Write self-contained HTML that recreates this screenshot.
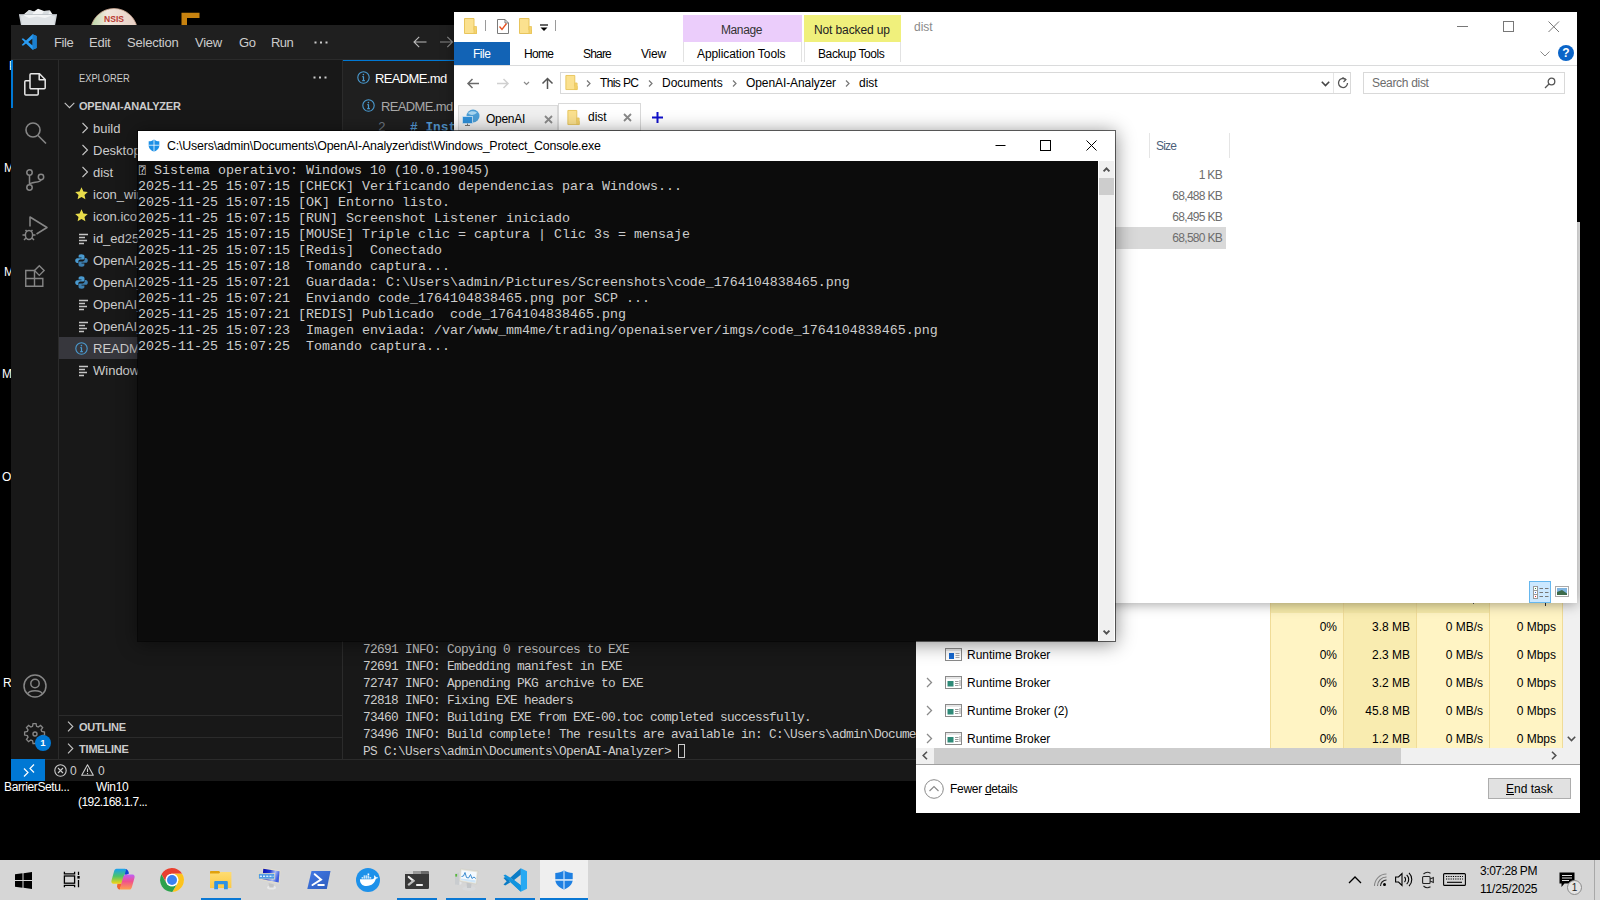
<!DOCTYPE html>
<html><head><meta charset="utf-8"><title>Desktop</title>
<style>
*{box-sizing:border-box;margin:0;padding:0}
html,body{width:1600px;height:900px;overflow:hidden;background:#000}
body{position:relative;font-family:"Liberation Sans",sans-serif;font-size:12px;color:#000}
.abs{position:absolute}
.t{position:absolute;white-space:nowrap;line-height:1}
svg{position:absolute;overflow:visible}
/* ---------- desktop ---------- */
#desk .lbl{color:#fff;font-size:12px}
/* ---------- taskbar ---------- */
#taskbar{left:0;top:860px;width:1600px;height:40px;background:#d6d6d6}
#taskbar .ul{top:38px;height:2px;background:#0a78d4}
/* ---------- vscode ---------- */
#vsc{left:11px;top:25px;width:1000px;height:756px;z-index:0;background:#181818;color:#ccc;overflow:hidden}
#vsc .title{left:0;top:0;width:1000px;height:35px;background:#1f1f1f;border-bottom:1px solid #2b2b2b;z-index:2}
#vsc .act{left:0;top:34px;width:48px;height:700px;background:#181818;border-right:1px solid #2b2b2b}
#vsc .side{left:48px;top:34px;width:284px;height:700px;background:#181818;border-right:1px solid #2b2b2b}
#vsc .edit{left:332px;top:34px;width:668px;height:700px;background:#1f1f1f}
#vsc .status{left:0;top:734px;width:1000px;height:22px;background:#181818;border-top:1px solid #2b2b2b}
#vsc .m{top:11px;font-size:13px;color:#ccc}
#vsc .row{font-size:13px;color:#ccc}
#vsc .mono{font-family:"Liberation Mono",monospace;font-size:12.83px}
#vsc .term pre{position:absolute;left:20px;top:2px;font-family:"Liberation Mono",monospace;font-size:12.8px;letter-spacing:-0.681px;line-height:17px;color:#ccc}
#vsc .cur{display:inline-block;width:7px;height:14px;border:1px solid #ccc;vertical-align:-3px}
/* ---------- explorer ---------- */
#exp{left:454px;top:12px;width:1123px;height:591px;background:#fff;box-shadow:0 1px 12px rgba(0,0,0,.38)}
#exp .sz{right:355px;color:#6d6d6d}
/* ---------- task manager ---------- */
#tm{left:916px;top:222px;width:664px;height:591px;background:#f0f0f0;overflow:hidden}
/* ---------- console ---------- */
#con{left:137px;top:130px;width:979px;height:512px;background:#0c0c0c;border:1px solid rgba(0,0,0,.58);background-clip:padding-box;box-shadow:0 2px 18px rgba(0,0,0,.45)}
#con .tb{left:0;top:0;width:977px;height:30px;background:#fff}
#con pre{position:absolute;left:0;top:32px;font-family:"Liberation Mono",monospace;font-size:13.33px;line-height:16px;color:#ccc}
</style></head><body>
<div id="desk">
 <svg style="left:17px;top:8px" width="42" height="20" viewBox="0 0 42 20"><path d="M2 6.500L40 6.500L37.500 20H4.500Z" fill="#cfd4d8"/><path d="M4 8L38 8L36.500 20H5.500Z" fill="#dfe3e6"/><path d="M6 7L12 2L17 3.500L21 0.800L27 3L33 2.500L36 7L28 10L20 8.500L12 10Z" fill="#f3f5f6"/><path d="M12 2L17 3.500L15 7L9 6ZM27 3L33 2.500L31 7L25 6.500Z" fill="#d8dde0"/><path d="M2 6.500H40" stroke="#b9bfc4" stroke-width="0.800"/></svg>
 <svg style="left:91px;top:8px" width="46" height="18" viewBox="0 0 46 18"><defs><linearGradient id="ng" x1="0" x2="1"><stop offset="0" stop-color="#b9d6a4"/><stop offset=".35" stop-color="#f1e6dc"/><stop offset="1" stop-color="#e8cfc4"/></linearGradient></defs><circle cx="23" cy="24" r="23.500" fill="url(#ng)" stroke="#c9a58f" stroke-width="0.800"/><text x="23" y="14" text-anchor="middle" font-family="Liberation Sans,sans-serif" font-weight="bold" font-size="8.500" fill="#b73a32">NSIS</text></svg>
 <svg style="left:181px;top:12px" width="19" height="14" viewBox="0 0 19 14"><path d="M0.500 0.800H18.500V6H6V14H0.500Z" fill="#c7820f"/></svg>
 <span class="t lbl" style="left:9px;top:60px">P</span>
 <span class="t lbl" style="left:4px;top:162px">M</span>
 <span class="t lbl" style="left:4px;top:266px">M</span>
 <span class="t lbl" style="left:2px;top:368px">M</span>
 <span class="t lbl" style="left:2px;top:471px">O</span>
 <span class="t lbl" style="left:3px;top:677px">R</span>
 <span class="t lbl" style="left:4px;top:781px;letter-spacing:-0.37px" id="d_bar">BarrierSetu...</span>
 <span class="t lbl" style="left:96px;top:781px;letter-spacing:-0.34px" id="d_win">Win10</span>
 <span class="t lbl" style="left:78px;top:796px;letter-spacing:-0.56px" id="d_ip">(192.168.1.7...</span>
</div>
<div id="vsc" class="abs">
 <div class="abs title">
  <svg style="left:10px;top:9px" width="16" height="16" viewBox="0 0 16 16"><path d="M11.6 0.2L5 6.5L2 4.2L0.6 5L3.6 8L0.6 11L2 11.8L5 9.5L11.6 15.8L15.6 14V2Z M11.6 4.6V11.4L7.2 8Z" fill="#2a9df4" fill-rule="evenodd"/><path d="M11.6 0.2L15.6 2V14L11.6 15.8Z" fill="#1a7fd0"/></svg>
  <span class="t m" style="left:43px;letter-spacing:-0.39px">File</span><span class="t m" style="left:78px;letter-spacing:-0.25px">Edit</span><span class="t m" style="left:116px;letter-spacing:-0.22px">Selection</span><span class="t m" style="left:184px;letter-spacing:-0.24px">View</span><span class="t m" style="left:228px;letter-spacing:-0.42px">Go</span><span class="t m" style="left:260px;letter-spacing:-0.52px">Run</span>
  <svg style="left:303px;top:16px" width="14" height="3" viewBox="0 0 14 3" fill="#ccc"><rect x="0.5" y="0.5" width="2" height="2"/><rect x="6" y="0.5" width="2" height="2"/><rect x="11.5" y="0.5" width="2" height="2"/></svg>
  <svg style="left:402px;top:11px" width="42" height="12" viewBox="0 0 42 12" fill="none" stroke="#bbb" stroke-width="1.1"><path d="M13.5 6H1M6.2 0.8L1 6L6.2 11.2"/><path d="M27 6H39.5M34.3 0.8L39.5 6L34.3 11.2" stroke="#8a8a8a"/></svg>
 </div>
 <div class="abs act">
  <div class="abs" style="left:0;top:1px;width:2px;height:48px;background:#0078d4"></div>
  <svg style="left:12px;top:13px" width="24" height="24" viewBox="0 0 24 24" fill="none" stroke="#e7e7e7" stroke-width="1.500" stroke-linejoin="round"><path d="M7 2.800A1 1 0 0 1 8 1.800H16.500L22.200 7.500V15.700A1 1 0 0 1 21.200 16.700H8A1 1 0 0 1 7 15.700Z"/><path d="M16.200 2V7.800H22"/><path d="M7 8.700H2.800A1 1 0 0 0 1.800 9.700V22A1 1 0 0 0 2.800 23H14.200A1 1 0 0 0 15.200 22V16.700"/></svg>
  <svg style="left:12px;top:61px" width="24" height="24" viewBox="0 0 24 24" fill="none" stroke="#868686" stroke-width="1.6"><circle cx="10" cy="10" r="7"/><path d="M15 15.500L23 23.500"/></svg>
  <svg style="left:12px;top:109px" width="24" height="24" viewBox="0 0 24 24" fill="none" stroke="#868686" stroke-width="1.5"><circle cx="6.500" cy="4.500" r="2.700"/><circle cx="6.500" cy="19.500" r="2.700"/><circle cx="18" cy="9" r="2.700"/><path d="M6.500 7.200V16.800M18 11.700C18 15 6.500 13.500 6.500 16.800"/></svg>
  <svg style="left:10px;top:156px" width="28" height="26" viewBox="0 0 28 26" fill="none" stroke="#868686" stroke-width="1.5" stroke-linejoin="round"><path d="M9 11.500V2L26 12.500L15.500 19"/><ellipse cx="8" cy="20" rx="3.600" ry="4.500"/><path d="M4.500 15L6 16.500M11.500 15L10 16.500M1.500 20H4.400M11.600 20H14.500M3 25L5 23M13 25L11 23"/></svg>
  <svg style="left:13px;top:205px" width="21" height="22.750" viewBox="0 0 24 26" fill="none" stroke="#868686" stroke-width="1.600"><path d="M2 7.500H12V25.500H2ZM2 16.500H21.500V25.500H12M12 16.500"/><path d="M17.500 2L23 7.500L17.500 13L12 7.500Z"/></svg>
  <svg style="left:12px;top:615px" width="24" height="24" viewBox="0 0 24 24" fill="none" stroke="#868686" stroke-width="1.5"><circle cx="12" cy="12" r="11"/><circle cx="12" cy="9.500" r="4.200"/><path d="M4.500 20C6 15.500 18 15.500 19.500 20"/></svg>
  <svg style="left:13px;top:664px" width="22" height="22" viewBox="0 0 24 24" fill="none" stroke="#868686" stroke-width="1.5"><circle cx="12" cy="12" r="2.200"/><path d="M10.300 1.500H13.700L14.300 4.600L16.200 5.400L18.800 3.600L21.200 6L19.400 8.600L20.200 10.500L23.300 11.100V14.500L20.200 15.100L19.400 17L21.200 19.600L18.800 22L16.200 20.200L14.300 21L13.700 24.100H10.300L9.700 21L7.800 20.200L5.200 22L2.800 19.600L4.600 17L3.800 15.100L0.700 14.500V11.100L3.800 10.500L4.600 8.600L2.800 6L5.200 3.600L7.800 5.400L9.700 4.600Z" transform="translate(0,-0.800) scale(0.96)"/></svg>
  <div class="abs" style="left:24px;top:676px;width:16px;height:16px;border-radius:8px;background:#0078d4;color:#fff;font-size:9.5px;font-weight:bold;text-align:center;line-height:16px">1</div>
 </div>
 <div class="abs side"></div>
 <div class="abs sidec" style="left:0;top:0;width:332px;height:757px">
  <span class="t" style="left:68px;top:48px;font-size:11px;color:#ccc;transform:scaleX(.845);transform-origin:0 0">EXPLORER</span>
  <svg style="left:302px;top:51px" width="14" height="3" viewBox="0 0 14 3" fill="#ccc"><rect x="0.500" y="0.500" width="2" height="2"/><rect x="6" y="0.500" width="2" height="2"/><rect x="11.500" y="0.500" width="2" height="2"/></svg>
  <svg style="left:53px;top:77px" width="11" height="7" viewBox="0 0 11 7"><path d="M0.700 0.800L5.500 5.600L10.300 0.800" fill="none" stroke="#c5c5c5" stroke-width="1.100"/></svg>
  <span class="t" style="left:68px;top:76px;font-size:11px;font-weight:bold;color:#ccc;letter-spacing:-0.2px">OPENAI-ANALYZER</span>
  <svg style="left:70px;top:97px" width="8" height="12" viewBox="0 0 8 12"><path d="M1.5 1L6.5 6L1.5 11" fill="none" stroke="#c5c5c5" stroke-width="1.1"/></svg>
  <span class="t row" style="left:82px;top:97px">build</span>
  <svg style="left:70px;top:119px" width="8" height="12" viewBox="0 0 8 12"><path d="M1.5 1L6.5 6L1.5 11" fill="none" stroke="#c5c5c5" stroke-width="1.1"/></svg>
  <span class="t row" style="left:82px;top:119px">Desktop</span>
  <svg style="left:70px;top:141px" width="8" height="12" viewBox="0 0 8 12"><path d="M1.5 1L6.5 6L1.5 11" fill="none" stroke="#c5c5c5" stroke-width="1.1"/></svg>
  <span class="t row" style="left:82px;top:141px">dist</span>
  <svg style="left:64px;top:162px" width="13" height="13" viewBox="0 0 13 13"><path d="M6.5 0.3L8.4 4.4L12.8 4.9L9.5 7.9L10.4 12.3L6.5 10.1L2.6 12.3L3.5 7.9L0.2 4.9L4.6 4.4Z" fill="#e8dc4a"/></svg>
  <span class="t row" style="left:82px;top:163px">icon_win.ico</span>
  <svg style="left:64px;top:184px" width="13" height="13" viewBox="0 0 13 13"><path d="M6.5 0.3L8.4 4.4L12.8 4.9L9.5 7.9L10.4 12.3L6.5 10.1L2.6 12.3L3.5 7.9L0.2 4.9L4.6 4.4Z" fill="#e8dc4a"/></svg>
  <span class="t row" style="left:82px;top:185px">icon.ico</span>
  <svg style="left:68px;top:208px" width="10" height="11" viewBox="0 0 10 11"><path d="M0 1.5H9M0 4.5H6M0 7.5H8M0 10.5H5" stroke="#c5c5c5" stroke-width="1.3"/></svg>
  <span class="t row" style="left:82px;top:207px">id_ed25519</span>
  <svg style="left:64px;top:229px" width="13" height="13" viewBox="0 0 13 13"><path d="M6.3 0.3C3.8 0.3 3.6 1.4 3.6 2.3V3.6H6.5V4.2H2.2C1 4.2 0.2 5.2 0.2 6.6C0.2 8 1 9 2.2 9H3.4V7.4C3.4 6.3 4.3 5.6 5.3 5.6H8C8.9 5.6 9.5 4.9 9.5 4.1V2.3C9.5 1.2 8.6 0.3 6.3 0.3Z" fill="#4a9bd1"/><path d="M6.7 12.7C9.2 12.7 9.4 11.6 9.4 10.7V9.4H6.5V8.8H10.8C12 8.8 12.8 7.8 12.8 6.4C12.8 5 12 4 10.8 4H9.6V5.6C9.6 6.7 8.7 7.4 7.7 7.4H5C4.1 7.4 3.5 8.1 3.5 8.9V10.7C3.5 11.8 4.4 12.7 6.7 12.7Z" fill="#3c7fb0"/></svg>
  <span class="t row" style="left:82px;top:229px">OpenAI_Analyzer.py</span>
  <svg style="left:64px;top:251px" width="13" height="13" viewBox="0 0 13 13"><path d="M6.3 0.3C3.8 0.3 3.6 1.4 3.6 2.3V3.6H6.5V4.2H2.2C1 4.2 0.2 5.2 0.2 6.6C0.2 8 1 9 2.2 9H3.4V7.4C3.4 6.3 4.3 5.6 5.3 5.6H8C8.9 5.6 9.5 4.9 9.5 4.1V2.3C9.5 1.2 8.6 0.3 6.3 0.3Z" fill="#4a9bd1"/><path d="M6.7 12.7C9.2 12.7 9.4 11.6 9.4 10.7V9.4H6.5V8.8H10.8C12 8.8 12.8 7.8 12.8 6.4C12.8 5 12 4 10.8 4H9.6V5.6C9.6 6.7 8.7 7.4 7.7 7.4H5C4.1 7.4 3.5 8.1 3.5 8.9V10.7C3.5 11.8 4.4 12.7 6.7 12.7Z" fill="#3c7fb0"/></svg>
  <span class="t row" style="left:82px;top:251px">OpenAI_Console.py</span>
  <svg style="left:68px;top:274px" width="10" height="11" viewBox="0 0 10 11"><path d="M0 1.5H9M0 4.5H6M0 7.5H8M0 10.5H5" stroke="#c5c5c5" stroke-width="1.3"/></svg>
  <span class="t row" style="left:82px;top:273px">OpenAI_Analyzer.spec</span>
  <svg style="left:68px;top:296px" width="10" height="11" viewBox="0 0 10 11"><path d="M0 1.5H9M0 4.5H6M0 7.5H8M0 10.5H5" stroke="#c5c5c5" stroke-width="1.3"/></svg>
  <span class="t row" style="left:82px;top:295px">OpenAI_Console.spec</span>
  <div class="abs" style="left:48px;top:312px;width:284px;height:22px;background:#37373d"></div>
  <svg style="left:64px;top:317px" width="13" height="13" viewBox="0 0 13 13"><circle cx="6.5" cy="6.5" r="5.7" fill="none" stroke="#4a9bd1" stroke-width="1.1"/><path d="M6.5 5.5V9.6M5.3 5.6H6.6M5.2 9.7H7.9" stroke="#4a9bd1" stroke-width="1.2" fill="none"/><circle cx="6.4" cy="3.6" r="0.8" fill="#4a9bd1"/></svg>
  <span class="t row" style="left:82px;top:317px">README.md</span>
  <svg style="left:68px;top:340px" width="10" height="11" viewBox="0 0 10 11"><path d="M0 1.5H9M0 4.5H6M0 7.5H8M0 10.5H5" stroke="#c5c5c5" stroke-width="1.3"/></svg>
  <span class="t row" style="left:82px;top:339px">Windows_Protect.spec</span>
  <div class="abs" style="left:48px;top:690px;width:284px;height:1px;background:#2b2b2b"></div>
  <div class="abs" style="left:48px;top:712px;width:284px;height:1px;background:#2b2b2b"></div>
  <svg style="left:56px;top:696px" width="7" height="11" viewBox="0 0 7 11"><path d="M1 0.700L5.800 5.500L1 10.300" fill="none" stroke="#c5c5c5" stroke-width="1.100"/></svg>
  <span class="t" style="left:68px;top:697px;font-size:11px;font-weight:bold;color:#ccc;letter-spacing:-0.2px">OUTLINE</span>
  <svg style="left:56px;top:718px" width="7" height="11" viewBox="0 0 7 11"><path d="M1 0.700L5.800 5.500L1 10.300" fill="none" stroke="#c5c5c5" stroke-width="1.100"/></svg>
  <span class="t" style="left:68px;top:719px;font-size:11px;font-weight:bold;color:#ccc;letter-spacing:-0.2px">TIMELINE</span>
 </div>
 <div class="abs edit">
  <div class="abs" style="left:0;top:0;width:668px;height:36px;background:#181818;border-bottom:1px solid #2b2b2b"></div>
  <div class="abs" style="left:0;top:1px;width:130px;height:35px;background:#1f1f1f;border-top:1px solid #0078d4;border-right:1px solid #2b2b2b"></div>
  <svg style="left:14px;top:12px" width="13" height="13" viewBox="0 0 13 13"><circle cx="6.500" cy="6.500" r="5.700" fill="none" stroke="#4a9bd1" stroke-width="1.100"/><path d="M6.500 5.500V9.600M5.300 5.600H6.600M5.200 9.700H7.900" stroke="#4a9bd1" stroke-width="1.200" fill="none"/><circle cx="6.400" cy="3.600" r="0.800" fill="#4a9bd1"/></svg>
  <span class="t" style="left:32px;top:13px;font-size:13px;color:#fff;letter-spacing:-0.64px">README.md</span>
  <svg style="left:19px;top:40px" width="13" height="13" viewBox="0 0 13 13"><circle cx="6.500" cy="6.500" r="5.700" fill="none" stroke="#4a9bd1" stroke-width="1.100"/><path d="M6.500 5.500V9.600M5.300 5.600H6.600M5.200 9.700H7.900" stroke="#4a9bd1" stroke-width="1.200" fill="none"/><circle cx="6.400" cy="3.600" r="0.800" fill="#4a9bd1"/></svg>
  <span class="t" style="left:38px;top:41px;font-size:13px;color:#a9a9a9;letter-spacing:-0.64px">README.md</span>
  <span class="t mono" style="left:35px;top:63px;color:#6e7681">2</span>
  <span class="t mono" style="left:67px;top:63px;color:#569cd6;font-weight:bold"># Instalación</span>
  <div class="abs term" style="left:0;top:580px;width:668px;height:120px;background:#181818">
<pre>72691 INFO: Copying 0 resources to EXE
72691 INFO: Embedding manifest in EXE
72747 INFO: Appending PKG archive to EXE
72818 INFO: Fixing EXE headers
73460 INFO: Building EXE from EXE-00.toc completed successfully.
73496 INFO: Build complete! The results are available in: C:\Users\admin\Documents\OpenAI-Analyzer\dist
PS C:\Users\admin\Documents\OpenAI-Analyzer&gt; <span class="cur"></span></pre>
  </div>
 </div>
 <div class="abs status">
  <div class="abs" style="left:0;top:-1px;width:34px;height:23px;background:#0078d4"></div>
  <svg style="left:12px;top:4px" width="12" height="13" viewBox="0 0 12 13" fill="none" stroke="#fff" stroke-width="1.200"><path d="M1 4.500L5 8.500L1 12.500M11 0.500L7 4.500L11 8.500"/></svg>
  <svg style="left:43px;top:4px" width="13" height="13" viewBox="0 0 13 13" fill="none" stroke="#ccc" stroke-width="1.100"><circle cx="6.500" cy="6.500" r="5.700"/><path d="M4 4L9 9M9 4L4 9"/></svg>
  <span class="t" style="left:59px;top:5px;font-size:12px;color:#ccc">0</span>
  <svg style="left:70px;top:4px" width="13" height="12" viewBox="0 0 13 12" fill="none" stroke="#ccc" stroke-width="1.100" stroke-linejoin="round"><path d="M6.500 0.800L12.300 11.300H0.700Z"/><path d="M6.500 4.500V8M6.500 9V10.200"/></svg>
  <span class="t" style="left:87px;top:5px;font-size:12px;color:#ccc">0</span>
 </div>
</div>
<div id="tm" class="abs">
 <div class="abs" style="left:0;top:0;width:647px;height:542px;background:#fff"></div>
 <div class="abs" style="left:354px;top:380px;width:73px;height:146px;background:#fff4c4"></div>
 <div class="abs" style="left:427px;top:380px;width:74px;height:146px;background:#f9ecb0"></div>
 <div class="abs" style="left:501px;top:380px;width:73px;height:146px;background:#fff4c4"></div>
 <div class="abs" style="left:574px;top:380px;width:73px;height:146px;background:#fff4c4"></div>
 <div class="abs" style="left:354px;top:380px;width:220px;height:11px;background:#f3e6a2;opacity:.8"></div>
 <div class="abs" style="left:629px;top:381px;width:1px;height:3px;background:#333"></div>
 <div class="abs" style="left:557px;top:381px;width:1px;height:1px;background:#555"></div>
 <div class="abs" style="left:354px;top:380px;width:1px;height:146px;background:#f0dc98"></div>
 <div class="abs" style="left:427px;top:380px;width:1px;height:146px;background:#f0dc98"></div>
 <div class="abs" style="left:500px;top:380px;width:1px;height:146px;background:#f0dc98"></div>
 <div class="abs" style="left:573px;top:380px;width:1px;height:146px;background:#f0dc98"></div>
 <div class="abs" style="left:646px;top:380px;width:1px;height:146px;background:#f0dc98"></div>
  <span class="t" style="right:243px;top:399px">0%</span>
  <span class="t" style="right:170px;top:399px">3.8 MB</span>
  <span class="t" style="right:97px;top:399px">0 MB/s</span>
  <span class="t" style="right:24px;top:399px">0 Mbps</span>
  <span class="t" style="right:243px;top:427px">0%</span>
  <span class="t" style="right:170px;top:427px">2.3 MB</span>
  <span class="t" style="right:97px;top:427px">0 MB/s</span>
  <span class="t" style="right:24px;top:427px">0 Mbps</span>
  <span class="t" style="right:243px;top:455px">0%</span>
  <span class="t" style="right:170px;top:455px">3.2 MB</span>
  <span class="t" style="right:97px;top:455px">0 MB/s</span>
  <span class="t" style="right:24px;top:455px">0 Mbps</span>
  <span class="t" style="right:243px;top:483px">0%</span>
  <span class="t" style="right:170px;top:483px">45.8 MB</span>
  <span class="t" style="right:97px;top:483px">0 MB/s</span>
  <span class="t" style="right:24px;top:483px">0 Mbps</span>
  <span class="t" style="right:243px;top:511px">0%</span>
  <span class="t" style="right:170px;top:511px">1.2 MB</span>
  <span class="t" style="right:97px;top:511px">0 MB/s</span>
  <span class="t" style="right:24px;top:511px">0 Mbps</span>
  <svg style="left:29px;top:426px" width="17" height="13" viewBox="0 0 17 13"><rect x="0.500" y="0.500" width="16" height="12" fill="#fff" stroke="#8a8a8a"/><rect x="1" y="1" width="15" height="2" fill="#e6e6e6"/><rect x="4" y="5" width="5" height="6" fill="#1669d1"/><path d="M10.500 5.500H14.500M10.500 7.500H14.500M10.500 9.500H14.500" stroke="#aaa"/></svg>
  <span class="t" style="left:51px;top:427px">Runtime Broker</span>
  <svg style="left:29px;top:454px" width="17" height="13" viewBox="0 0 17 13"><rect x="0.500" y="0.500" width="16" height="12" fill="#fff" stroke="#8a8a8a"/><rect x="1" y="1" width="15" height="2" fill="#e6e6e6"/><rect x="2.500" y="5" width="6" height="5.500" fill="#2e8a78"/><path d="M10 5.500H13.500M10 7.500H13.500M10 9.500H13.500" stroke="#999"/><path d="M15 4V10" stroke="#999"/></svg>
  <span class="t" style="left:51px;top:455px">Runtime Broker</span>
  <svg style="left:10px;top:455px" width="7" height="11" viewBox="0 0 7 11"><path d="M1 1L5.500 5.500L1 10" fill="none" stroke="#8a8a8a" stroke-width="1.300"/></svg>
  <svg style="left:29px;top:482px" width="17" height="13" viewBox="0 0 17 13"><rect x="0.500" y="0.500" width="16" height="12" fill="#fff" stroke="#8a8a8a"/><rect x="1" y="1" width="15" height="2" fill="#e6e6e6"/><rect x="2.500" y="5" width="6" height="5.500" fill="#2e8a78"/><path d="M10 5.500H13.500M10 7.500H13.500M10 9.500H13.500" stroke="#999"/><path d="M15 4V10" stroke="#999"/></svg>
  <span class="t" style="left:51px;top:483px">Runtime Broker (2)</span>
  <svg style="left:10px;top:483px" width="7" height="11" viewBox="0 0 7 11"><path d="M1 1L5.500 5.500L1 10" fill="none" stroke="#8a8a8a" stroke-width="1.300"/></svg>
  <svg style="left:29px;top:510px" width="17" height="13" viewBox="0 0 17 13"><rect x="0.500" y="0.500" width="16" height="12" fill="#fff" stroke="#8a8a8a"/><rect x="1" y="1" width="15" height="2" fill="#e6e6e6"/><rect x="2.500" y="5" width="6" height="5.500" fill="#2e8a78"/><path d="M10 5.500H13.500M10 7.500H13.500M10 9.500H13.500" stroke="#999"/><path d="M15 4V10" stroke="#999"/></svg>
  <span class="t" style="left:51px;top:511px">Runtime Broker</span>
  <svg style="left:10px;top:511px" width="7" height="11" viewBox="0 0 7 11"><path d="M1 1L5.500 5.500L1 10" fill="none" stroke="#8a8a8a" stroke-width="1.300"/></svg>
  <svg style="left:651px;top:514px" width="9" height="6" viewBox="0 0 9 6"><path d="M0.800 0.800L4.500 4.500L8.200 0.800" fill="none" stroke="#505050" stroke-width="1.600"/></svg>
 <div class="abs" style="left:0;top:526px;width:647px;height:16px;background:#f0f0f0"></div>
 <div class="abs" style="left:18px;top:526px;width:467px;height:16px;background:#cdcdcd"></div>
 <svg style="left:6px;top:529px" width="6" height="9" viewBox="0 0 6 9"><path d="M5 0.800L1.200 4.500L5 8.200" fill="none" stroke="#505050" stroke-width="1.600"/></svg>
 <svg style="left:635px;top:529px" width="6" height="9" viewBox="0 0 6 9"><path d="M1 0.800L4.800 4.500L1 8.200" fill="none" stroke="#505050" stroke-width="1.600"/></svg>
 <div class="abs" style="left:0;top:542px;width:664px;height:1px;background:#a0a0a0"></div>
 <div class="abs" style="left:0;top:543px;width:664px;height:48px;background:#fff"></div>
 <svg style="left:8px;top:557px" width="20" height="20" viewBox="0 0 20 20" fill="none" stroke="#8a8a8a" stroke-width="1"><circle cx="10" cy="10" r="9.300"/><path d="M5.500 12L10 7.500L14.500 12" stroke-width="1.200"/></svg>
 <span class="t" style="left:34px;top:561px;letter-spacing:-0.30px" id="tm_fd">Fewer <u>d</u>etails</span>
 <div class="abs" style="left:572px;top:556px;width:83px;height:21px;background:#e1e1e1;border:1px solid #adadad"></div>
 <span class="t" style="left:590px;top:561px" id="tm_et"><u>E</u>nd task</span>
</div>
<div id="exp" class="abs">
 <svg style="left:10px;top:6px" width="13" height="16" viewBox="0 0 13 16"><path d="M0.500 0.500H10V12H12.500V15.500H0.500Z" fill="#fbe18f" stroke="#e8c55c" stroke-width="1"/><path d="M10 8.500H12.500V15.500H10Z" fill="#f5d36e" stroke="#e8c55c" stroke-width="0.800"/></svg>
 <div class="abs" style="left:31px;top:8px;width:1px;height:11px;background:#9a9a9a"></div>
 <svg style="left:43px;top:7px" width="12" height="15" viewBox="0 0 12 15"><path d="M0.500 0.500H8L11.500 4V14.500H0.500Z" fill="#fff" stroke="#7a7a7a"/><path d="M8 0.500V4H11.500" fill="none" stroke="#7a7a7a"/><path d="M2.500 7.500L5 10.500L9.500 4.500" fill="none" stroke="#e8501e" stroke-width="1.300"/></svg>
 <svg style="left:65px;top:6px" width="13" height="16" viewBox="0 0 13 16"><path d="M0.500 0.500H10V12H12.500V15.500H0.500Z" fill="#fbe18f" stroke="#e8c55c" stroke-width="1"/><path d="M10 8.500H12.500V15.500H10Z" fill="#f5d36e" stroke="#e8c55c" stroke-width="0.800"/></svg>
 <svg style="left:86px;top:12px" width="8" height="8" viewBox="0 0 8 8"><path d="M0 1H8" stroke="#000" stroke-width="1.200"/><path d="M0.500 3.500H7.500L4 7Z" fill="#000"/></svg>
 <div class="abs" style="left:101px;top:8px;width:1px;height:11px;background:#9a9a9a"></div>
 <div class="abs" style="left:229px;top:3px;width:119px;height:27px;background:#ebcdfb"></div>
 <span class="t" style="left:267px;top:12px;color:#333;letter-spacing:-0.40px" id="e_manage">Manage</span>
 <div class="abs" style="left:350px;top:3px;width:97px;height:27px;background:#f0f07c"></div>
 <span class="t" style="left:360px;top:12px;color:#222;letter-spacing:-0.12px" id="e_nbu">Not backed up</span>
 <span class="t" style="left:460px;top:9px;color:#8a8a8a" id="e_dist">dist</span>
 <svg style="left:1003px;top:9px" width="104" height="12" viewBox="0 0 104 12" fill="none" stroke="#777" stroke-width="1"><path d="M0 5.500H11"/><rect x="46.500" y="0.500" width="10" height="10"/><path d="M91.500 0.500L102 11M102 0.500L91.500 11"/></svg>
 <div class="abs" style="left:0;top:30px;width:56px;height:23px;background:#1263b5"></div>
 <span class="t" style="left:19px;top:36px;color:#fff;letter-spacing:-0.51px" id="e_file">File</span>
 <span class="t" style="left:70px;top:36px;letter-spacing:-0.68px" id="e_home">Home</span>
 <span class="t" style="left:129px;top:36px;letter-spacing:-0.81px" id="e_share">Share</span>
 <span class="t" style="left:187px;top:36px;letter-spacing:-0.20px" id="e_view">View</span>
 <div class="abs" style="left:229px;top:30px;width:1px;height:20px;background:#e2e2e2"></div>
 <div class="abs" style="left:347px;top:30px;width:1px;height:20px;background:#e2e2e2"></div>
 <div class="abs" style="left:350px;top:30px;width:1px;height:20px;background:#e2e2e2"></div>
 <div class="abs" style="left:446px;top:30px;width:1px;height:20px;background:#e2e2e2"></div>
 <span class="t" style="left:243px;top:36px;letter-spacing:-0.08px" id="e_apptools">Application Tools</span>
 <span class="t" style="left:364px;top:36px;letter-spacing:-0.39px" id="e_bktools">Backup Tools</span>
 <svg style="left:1086px;top:39px" width="10" height="6" viewBox="0 0 10 6"><path d="M0.500 0.500L5 5L9.500 0.500" fill="none" stroke="#8a8a8a"/></svg>
 <div class="abs" style="left:1104px;top:33px;width:16px;height:16px;border-radius:8px;background:#0a64c8;color:#fff;font-size:12px;font-weight:bold;text-align:center;line-height:16px">?</div>
 <div class="abs" style="left:0;top:53px;width:1123px;height:1px;background:#dadbdc"></div>
 <svg style="left:13px;top:66px" width="90" height="11" viewBox="0 0 90 11" fill="none" stroke-width="1.500"><path d="M12 5.500H1M5.500 1L1 5.500L5.500 10" stroke="#6a6a6a"/><path d="M30 5.500H41M36.500 1L41 5.500L36.500 10" stroke="#d0d0d0"/><path d="M57 4L59.500 6.500L62 4" stroke="#8a8a8a" stroke-width="1.200"/><path d="M80.500 11V0.500M75.500 5.500L80.500 0.500L85.500 5.500" stroke="#555"/></svg>
 <div class="abs" style="left:106px;top:60px;width:791px;height:22px;border:1px solid #d9d9d9"></div>
 <div class="abs" style="left:879px;top:61px;width:1px;height:20px;background:#e5e5e5"></div>
 <svg style="left:111px;top:63px" width="13" height="15" viewBox="0 0 13 16"><path d="M0.500 0.500H10V12H12.500V15.500H0.500Z" fill="#fbe18f" stroke="#e8c55c" stroke-width="1"/><path d="M10 8.500H12.500V15.500H10Z" fill="#f5d36e" stroke="#e8c55c" stroke-width="0.800"/></svg>
 <svg style="left:132px;top:68px" width="5" height="7" viewBox="0 0 5 7"><path d="M1 0.500L4 3.500L1 6.500" fill="none" stroke="#777" stroke-width="1.200"/></svg>
 <span class="t" style="left:146px;top:65px;letter-spacing:-0.61px" id="e_thispc">This PC</span>
 <svg style="left:194px;top:68px" width="5" height="7" viewBox="0 0 5 7"><path d="M1 0.500L4 3.500L1 6.500" fill="none" stroke="#777" stroke-width="1.200"/></svg>
 <span class="t" style="left:208px;top:65px" id="e_docs">Documents</span>
 <svg style="left:278px;top:68px" width="5" height="7" viewBox="0 0 5 7"><path d="M1 0.500L4 3.500L1 6.500" fill="none" stroke="#777" stroke-width="1.200"/></svg>
 <span class="t" style="left:292px;top:65px;letter-spacing:-0.09px" id="e_oaa">OpenAI-Analyzer</span>
 <svg style="left:391px;top:68px" width="5" height="7" viewBox="0 0 5 7"><path d="M1 0.500L4 3.500L1 6.500" fill="none" stroke="#777" stroke-width="1.200"/></svg>
 <span class="t" style="left:405px;top:65px" id="e_dist2">dist</span>
 <svg style="left:867px;top:69px" width="9" height="6" viewBox="0 0 9 6"><path d="M0.800 0.800L4.500 4.500L8.200 0.800" fill="none" stroke="#444" stroke-width="1.600"/></svg>
 <svg style="left:883px;top:65px" width="12" height="12" viewBox="0 0 12 12" fill="none" stroke="#555" stroke-width="1.300"><path d="M8.500 2.300A4.500 4.500 0 1 0 10.500 6"/><path d="M5.500 0.500L9 2.500L6.500 5" stroke-width="1.100"/></svg>
 <div class="abs" style="left:909px;top:60px;width:202px;height:22px;border:1px solid #d9d9d9"></div>
 <span class="t" style="left:918px;top:65px;color:#6d6d6d;letter-spacing:-0.31px" id="e_search">Search dist</span>
 <svg style="left:1090px;top:65px" width="12" height="12" viewBox="0 0 12 12" fill="none" stroke="#555" stroke-width="1.300"><circle cx="7.500" cy="4.500" r="3.300"/><path d="M5 7L1 11"/></svg>
 <div class="abs" style="left:4px;top:93px;width:100px;height:26px;background:#f0f0f0;border:1px solid #d9d9d9"></div>
 <div class="abs" style="left:104px;top:91px;width:83px;height:28px;background:#fff;border:1px solid #d9d9d9"></div>
 <svg style="left:8px;top:97px" width="18" height="18" viewBox="0 0 18 18"><circle cx="11" cy="7" r="6.500" fill="#4d9fd6"/><path d="M6 4C8 2 12 1.500 15 3.500C13 5.500 9 7.500 6 4Z" fill="#a8d6f0"/><rect x="0.500" y="7.500" width="10" height="7" fill="#2e8fd8" stroke="#cfe6f7" stroke-width="0.800"/><path d="M3 16.500H8M5.500 14.500V16.500" stroke="#777" stroke-width="1"/></svg>
 <span class="t" style="left:32px;top:101px;letter-spacing:-0.28px" id="e_tab1">OpenAI</span>
 <svg style="left:90px;top:103px" width="9" height="9" viewBox="0 0 9 9"><path d="M1 1L8 8M8 1L1 8" stroke="#8a8a8a" stroke-width="1.800"/></svg>
 <svg style="left:113px;top:98px" width="13" height="15" viewBox="0 0 13 16"><path d="M0.500 0.500H10V12H12.500V15.500H0.500Z" fill="#fbe18f" stroke="#e8c55c" stroke-width="1"/><path d="M10 8.500H12.500V15.500H10Z" fill="#f5d36e" stroke="#e8c55c" stroke-width="0.800"/></svg>
 <span class="t" style="left:134px;top:99px" id="e_tab2">dist</span>
 <svg style="left:169px;top:101px" width="9" height="9" viewBox="0 0 9 9"><path d="M1 1L8 8M8 1L1 8" stroke="#8a8a8a" stroke-width="1.800"/></svg>
 <svg style="left:198px;top:100px" width="11" height="11" viewBox="0 0 11 11"><path d="M5.500 0V11M0 5.500H11" stroke="#1010cc" stroke-width="2"/></svg>
 <div class="abs" style="left:695px;top:121px;width:1px;height:25px;background:#e5e5e5"></div>
 <div class="abs" style="left:775px;top:121px;width:1px;height:25px;background:#e5e5e5"></div>
 <span class="t" style="left:702px;top:128px;color:#4c607a;letter-spacing:-0.79px" id="e_size">Size</span>
 <div class="abs" style="left:600px;top:215px;width:172px;height:22px;background:#d9d9d9"></div>
 <span class="t sz" style="top:157px;letter-spacing:-0.68px">1 KB</span>
 <span class="t sz" style="top:178px;letter-spacing:-0.71px">68,488 KB</span>
 <span class="t sz" style="top:199px;letter-spacing:-0.71px">68,495 KB</span>
 <span class="t sz" style="top:220px;letter-spacing:-0.71px">68,580 KB</span>
 <div class="abs" style="left:1075px;top:569px;width:22px;height:22px;background:#cce8ff;border:1px solid #66b7ee"></div>
 <svg style="left:1079px;top:574px" width="16" height="13" viewBox="0 0 16 13" fill="none"><rect x="0.500" y="0.500" width="4" height="12" fill="#fff" stroke="#999"/><path d="M0.500 4.500H4.500M0.500 8.500H4.500" stroke="#999"/><rect x="2" y="2" width="1" height="1" fill="#3a8a3a"/><rect x="2" y="6" width="1" height="1" fill="#3a6fe0"/><rect x="2" y="10" width="1" height="1" fill="#e02020"/><path d="M6.500 2.500H10M12 2.500H15.500M6.500 6.500H10M12 6.500H15.500M6.500 10.500H10M12 10.500H15.500" stroke="#777" stroke-width="1.200"/></svg>
 <svg style="left:1101px;top:574px" width="14" height="11" viewBox="0 0 14 11"><rect x="0.500" y="0.500" width="13" height="10" fill="#fff" stroke="#aaa"/><rect x="2" y="2" width="10" height="7" fill="#7fb4e0"/><path d="M2 9L2 6L7 4L12 7.500V9Z" fill="#3c6a4a"/></svg>
</div>
<div id="con" class="abs">
 <div class="abs tb">
  <svg style="left:10px;top:8px" width="12" height="13" viewBox="0 0 14 15"><path d="M7 0.5 C5 2 3 2.6 0.8 2.6 V7.5 C0.8 11 3.6 13.6 7 14.6 C10.4 13.6 13.2 11 13.2 7.5 V2.6 C11 2.6 9 2 7 0.5Z" fill="#1b8fe6"/><path d="M7 0.5V14.6M0.8 7.2H13.2" stroke="#fff" stroke-width="0.9"/></svg>
  <span class="t" style="left:29px;top:9px;font-size:12.4px;letter-spacing:-0.19px">C:\Users\admin\Documents\OpenAI-Analyzer\dist\Windows_Protect_Console.exe</span>
  <svg style="left:857px;top:9px" width="100" height="12" viewBox="0 0 100 12" fill="none" stroke="#000" stroke-width="1"><path d="M0.5 5.5H10.5"/><rect x="45.5" y="0.5" width="10" height="10"/><path d="M91.5 0.5L101.5 10.5M101.5 0.5L91.5 10.5"/></svg>
 </div>
 <div class="abs sb" style="left:960px;top:30px;width:17px;height:480px;background:#fff">
  <div class="abs" style="left:1px;top:0;width:15px;height:480px;background:#f0f0f0"></div>
  <div class="abs" style="left:1px;top:17px;width:15px;height:17px;background:#cdcdcd"></div>
  <svg style="left:5px;top:6px" width="7" height="5" viewBox="0 0 7 5"><path d="M0.600 4.300L3.500 1.300L6.400 4.300" fill="none" stroke="#505050" stroke-width="1.900"/></svg>
  <svg style="left:5px;top:469px" width="7" height="5" viewBox="0 0 7 5"><path d="M0.600 0.700L3.500 3.700L6.400 0.700" fill="none" stroke="#505050" stroke-width="1.900"/></svg>
 </div>
<pre><span style="font-family:'DejaVu Sans Mono',monospace;font-size:10.5px;line-height:1;display:inline-block;width:8px;text-indent:1px;vertical-align:0.5px">&#9072;</span> Sistema operativo: Windows 10 (10.0.19045)
2025-11-25 15:07:15 [CHECK] Verificando dependencias para Windows...
2025-11-25 15:07:15 [OK] Entorno listo.
2025-11-25 15:07:15 [RUN] Screenshot Listener iniciado
2025-11-25 15:07:15 [MOUSE] Triple clic = captura | Clic 3s = mensaje
2025-11-25 15:07:15 [Redis]  Conectado
2025-11-25 15:07:18  Tomando captura...
2025-11-25 15:07:21  Guardada: C:\Users\admin/Pictures/Screenshots\code_1764104838465.png
2025-11-25 15:07:21  Enviando code_1764104838465.png por SCP ...
2025-11-25 15:07:21 [REDIS] Publicado  code_1764104838465.png
2025-11-25 15:07:23  Imagen enviada: /var/www_mm4me/trading/openaiserver/imgs/code_1764104838465.png
2025-11-25 15:07:25  Tomando captura...
</pre>
</div>
<div id="taskbar" class="abs">
 <div class="abs" style="left:540px;top:0;width:48px;height:40px;background:#efefef"></div>
 <div class="abs ul" style="left:201px;width:40px"></div>
 <div class="abs ul" style="left:397px;width:40px"></div>
 <div class="abs ul" style="left:446px;width:40px"></div>
 <div class="abs ul" style="left:495px;width:40px"></div>
 <div class="abs ul" style="left:540px;width:48px"></div>
 <svg style="left:15px;top:12px" width="17" height="17" viewBox="0 0 17 17" fill="#000"><path d="M0 2.300L7.500 1.300V8H0ZM8.500 1.150L17 0V8H8.500ZM0 9H7.500V15.700L0 14.700ZM8.500 9H17V17L8.500 15.850Z"/></svg>
 <svg style="left:63px;top:11px" width="17" height="17" viewBox="0 0 17 17" fill="none" stroke="#000" stroke-width="1.300"><path d="M1.400 0.800V2.900H11.600V0.800"/><rect x="1.400" y="5" width="10.200" height="7.200"/><path d="M1.400 16.200V14.300H11.600V16.200"/><path d="M15.500 0.800V4M15.500 9V16.200"/><rect x="14.400" y="5" width="2.300" height="2.600" fill="#000" stroke="none"/></svg>
 <svg style="left:111px;top:8px" width="24" height="22" viewBox="0 0 24 22"><defs><linearGradient id="cp1" x1="0" y1="0" x2="0" y2="1"><stop offset="0" stop-color="#18a0f4"/><stop offset=".5" stop-color="#4cc46a"/><stop offset="1" stop-color="#f4d414"/></linearGradient><linearGradient id="cp2" x1="0" y1="0" x2="0" y2="1"><stop offset="0" stop-color="#c060f6"/><stop offset=".45" stop-color="#f0508e"/><stop offset="1" stop-color="#ffa04c"/></linearGradient></defs><path d="M13 1.200C15.500 0.200 17.500 2 18 5.500L15 7L11.500 5Z" fill="#1244d6"/><path d="M6.500 15.500L11 15.500L9 21.400C7.500 21.800 6.500 20.500 6 18.500Z" fill="#f2622e"/><path d="M5.500 0.700H14C15 0.700 15.200 1.500 14.900 2.500L11.800 13C11.300 14.800 10.400 15.700 8.800 15.700H2.500C0.800 15.700 0 14.400 0.500 12.500L3 3.500C3.500 1.600 4.200 0.700 5.500 0.700Z" fill="url(#cp1)"/><path d="M18.500 21.600H10C9 21.600 8.800 20.800 9.100 19.800L12.200 9.300C12.700 7.500 13.600 6.600 15.200 6.600H21.500C23.200 6.600 24 7.900 23.500 9.800L21 18.800C20.500 20.700 19.800 21.600 18.500 21.600Z" fill="url(#cp2)"/></svg>
 <svg style="left:160px;top:8px" width="24" height="24" viewBox="0 0 24 24"><circle cx="12" cy="12" r="11.800" fill="#fff"/><path d="M1.440 6.310A12 12 0 0 1 22.210 5.700L12 5.700A6.300 6.300 0 0 0 6.540 15.150Z" fill="#e8402f"/><path d="M22.210 5.700A12 12 0 0 1 12.350 23.990L17.460 15.150A6.300 6.300 0 0 0 12 5.700Z" fill="#fcc31e"/><path d="M12.350 23.990A12 12 0 0 1 1.440 6.310L6.540 15.150A6.300 6.300 0 0 0 17.460 15.150Z" fill="#2ca14c"/><circle cx="12" cy="12" r="6.300" fill="#fff"/><circle cx="12" cy="12" r="5" fill="#3b82f0"/></svg>
 <svg style="left:210px;top:11px" width="22" height="19" viewBox="0 0 22 19"><defs><linearGradient id="fg" x1="0" y1="0" x2="0" y2="1"><stop offset="0" stop-color="#ffdc72"/><stop offset="1" stop-color="#fbc944"/></linearGradient></defs><path d="M0.800 0H9L10 1V3H0V0.800A0.800 0.800 0 0 1 0.800 0Z" fill="#e0a10e"/><path d="M0 2.500L9 2.500L10.500 1H21.400V17H0Z" fill="url(#fg)"/><path d="M4.200 11A1 1 0 0 1 5.200 10H16.800A1 1 0 0 1 17.800 11V18.200H14V13.200H8V18.200H4.200Z" fill="#2e92e4"/></svg>
 <svg style="left:258px;top:7px" width="24" height="25" viewBox="0 0 24 25"><defs><linearGradient id="bm" x1="0" y1="0" x2="1" y2="0.300"><stop offset="0" stop-color="#0606a8"/><stop offset=".45" stop-color="#1a34d0"/><stop offset=".75" stop-color="#a9bcf4"/><stop offset="1" stop-color="#3f5fe0"/></linearGradient></defs><ellipse cx="13.500" cy="21" rx="6.500" ry="3" fill="#d6d6d6"/><ellipse cx="13.500" cy="20.500" rx="4.500" ry="2" fill="#e8e8e8"/><path d="M10.500 16L16 17.500L15.500 20.500H11.500Z" fill="#c4c4c4"/><path d="M4.500 0.800L22.500 3.500L21.500 17L3.500 13Z" fill="#e6e0cc"/><path d="M5.300 1.800L21.500 4.300L20.700 15.600L4.400 12.200Z" fill="url(#bm)"/><rect x="0.400" y="6.400" width="16.300" height="5.600" fill="#3b8fe2" stroke="#e6dfc6" stroke-width="0.800"/><path d="M1.800 9.200H15.500" stroke="#d8ecff" stroke-width="1.400" stroke-dasharray="2.200 1"/><path d="M1.500 7.600H15.800M1.500 10.800H15.800" stroke="#8cc0f2" stroke-width="0.700" stroke-dasharray="1 1"/></svg>
 <svg style="left:307px;top:11px" width="24" height="18" viewBox="0 0 24 18"><defs><linearGradient id="psg" x1="0" y1="0" x2="1" y2="1"><stop offset="0" stop-color="#4279e6"/><stop offset="1" stop-color="#2e5cbc"/></linearGradient></defs><path d="M4.500 0H23.500L19.800 18H0.300Z" fill="url(#psg)"/><path d="M7.700 3.200L14 8.600L5.500 14" fill="none" stroke="#fff" stroke-width="2" stroke-linecap="round"/><path d="M11.300 14H16.800" stroke="#fff" stroke-width="2" stroke-linecap="round"/></svg>
 <svg style="left:356px;top:8px" width="24" height="24" viewBox="0 0 24 24"><circle cx="12" cy="12" r="12" fill="#1d91ea"/><path d="M4 11.200H16.200C17.300 11.200 18 10.700 18.300 9.800C17.900 9 18 8 18.600 7.300C19.300 7.800 19.700 8.500 19.800 9.300C20.500 9 21.400 9.100 22 9.600C21.600 10.400 20.800 10.800 19.900 10.800C18.800 14.500 16 18 10.500 18C6 18 3.800 15 4 11.200Z" fill="#fff"/><path d="M5.600 9.200H7.200V10.600H5.600ZM7.600 9.200H9.200V10.600H7.600ZM9.600 9.200H11.200V10.600H9.600ZM11.600 9.200H13.200V10.600H11.600ZM13.600 9.200H15.200V10.600H13.600ZM7.600 7.400H9.200V8.800H7.600ZM9.600 7.400H11.200V8.800H9.600ZM11.600 7.400H13.200V8.800H11.600ZM11.600 5.600H13.200V7H11.600Z" fill="#fff"/></svg>
 <svg style="left:405px;top:11px" width="24" height="18" viewBox="0 0 24 18"><path d="M0 3H24V16.800A1.200 1.200 0 0 1 22.800 18H1.200A1.200 1.200 0 0 1 0 16.800Z" fill="#383838"/><rect x="0" y="0" width="8" height="3" fill="#cfcfcf"/><rect x="8" y="0" width="8" height="3" fill="#9a9a9a"/><path d="M16 0H23A1 1 0 0 1 24 1V3H16Z" fill="#6a6a6a"/><path d="M3.800 6L8.500 9.800" stroke="#f2f2f2" stroke-width="2.200" stroke-linecap="round"/><path d="M8.500 9.800L3.800 13.600" stroke="#bdbdbd" stroke-width="2.200" stroke-linecap="round"/><path d="M11.200 14H17.800" stroke="#f2f2f2" stroke-width="2"/></svg>
 <svg style="left:454px;top:8px" width="25" height="24" viewBox="0 0 25 24"><ellipse cx="15" cy="20.500" rx="6.500" ry="2.600" fill="#d8dadc"/><path d="M12.500 14.500L17.500 15.500L17 20H13Z" fill="#c2c5c8"/><path d="M1 5.500L5.500 4.500V17L1 16.500Z" fill="#c9cccf"/><path d="M5.500 4.500L7.500 5.500V16L5.500 17Z" fill="#e4e6e8"/><rect x="1.300" y="6" width="1.800" height="2.600" fill="#58b83a"/><path d="M6.500 0.800L24 3L22.500 16.200L5.500 13.200Z" fill="#e8e6dc" stroke="#c8c8c0" stroke-width="0.500"/><path d="M7.600 2.200L22.600 4.200L21.400 14.700L6.700 12.100Z" fill="#f4faff"/><path d="M7 10.500L21.500 12.200L21.400 14.700L6.700 12.100Z" fill="#cfe6f8"/><path d="M7.500 8.500L9.500 8L11 4.500L12.500 9.500L14.500 10L16.500 6.500L18 10.500L20 9L21.800 10.500" fill="none" stroke="#3a8cd0" stroke-width="1"/></svg>
 <svg style="left:503px;top:8px" width="24" height="24" viewBox="0 0 24 24"><path d="M17.800 0.200L5.500 11.500L2.200 9L0.500 10L4.500 14.200L2.500 16.300Z" fill="#0b7cc6" transform="translate(0,0)"/><path d="M2.200 6.500L0.500 7.600L17.800 23.800L18.200 17.500L7.500 9.800Z" fill="#1294de"/><path d="M2.200 17.500L0.500 16.400L5 12L7.500 14.200Z" fill="#0b7cc6"/><path d="M17.800 0.200L24 3.200V20.800L17.800 23.800Z" fill="#28a9f2"/><path d="M17.800 0.200L7.500 9.800L10.800 12.300L17.800 6.800Z" fill="#0b7cc6"/><path d="M17.800 17.200L10.800 11.800L7.500 14.200L17.800 23.800Z" fill="#1294de"/></svg>
 <svg style="left:552px;top:10px" width="24" height="20" viewBox="0 0 24 20"><path d="M12 0.600C9.500 2.200 6.500 2.900 3.300 2.900V9.500C3.300 14 7 17.600 12 19.400C17 17.600 20.700 14 20.700 9.500V2.900C17.500 2.900 14.500 2.200 12 0.600Z" fill="#1e80e2"/><path d="M12 0V19.600" stroke="#bcdcfa" stroke-width="1.300"/><path d="M0 9.900H24" stroke="#f6f6f6" stroke-width="1.300"/><path d="M3.300 9.900H20.700" stroke="#bcdcfa" stroke-width="1.300"/></svg>
 <svg style="left:1348px;top:16px" width="14" height="8" viewBox="0 0 14 8"><path d="M1 7L7 1L13 7" fill="none" stroke="#000" stroke-width="1.300"/></svg>
 <svg style="left:1373px;top:12px" width="15" height="15" viewBox="0 0 15 15" fill="none" stroke="#555" stroke-width="1.100"><path d="M1.500 14A12 12 0 0 1 13.500 2" stroke="#888"/><path d="M4.500 14A9 9 0 0 1 13.500 5" stroke="#777"/><path d="M7.500 14A6 6 0 0 1 13.500 8" stroke="#222"/><circle cx="11.500" cy="12.500" r="1.500" fill="#000" stroke="none"/></svg>
 <svg style="left:1395px;top:12px" width="18" height="15" viewBox="0 0 18 15" fill="none" stroke="#000" stroke-width="1.100"><path d="M0.600 5H3.500L7 1.500V13.500L3.500 10H0.600Z"/><path d="M9.500 5A3.500 3.500 0 0 1 9.500 10M11.700 2.800A6.500 6.500 0 0 1 11.700 12.200M14 0.800A9.500 9.500 0 0 1 14 14.200"/></svg>
 <svg style="left:1422px;top:12px" width="12" height="16" viewBox="0 0 12 16" fill="none" stroke="#222" stroke-width="1.100"><rect x="0.600" y="4.500" width="7.500" height="7" rx="1"/><path d="M8.100 7L11.300 5.500V10.500L8.100 9"/><path d="M1.500 2A6 6 0 0 1 8.500 1.200M1.500 14A6 6 0 0 0 8.500 14.800"/></svg>
 <svg style="left:1443px;top:13px" width="23" height="13" viewBox="0 0 23 13" fill="none" stroke="#000" stroke-width="1.100"><rect x="0.600" y="0.600" width="21.800" height="11.800" rx="1"/><path d="M3 3.500H20M3 6H20" stroke-dasharray="1.200 1.100"/><path d="M4 9.300H19"/></svg>
 <span class="t" style="left:1480px;top:5px;letter-spacing:-0.44px" id="tb_time">3:07:28 PM</span>
 <span class="t" style="left:1480px;top:23px;letter-spacing:-0.18px" id="tb_date">11/25/2025</span>
 <svg style="left:1559px;top:12px" width="17" height="17" viewBox="0 0 17 17"><path d="M0.500 0.500H15.500V11.500H5.500L2.500 15V11.500H0.500Z" fill="#000"/><path d="M3 3.500H13M3 6H13M3 8.500H10" stroke="#dfdfdf" stroke-width="1"/></svg>
 <div class="abs" style="left:1567px;top:20px;width:15px;height:15px;border-radius:8px;background:#e4e4e4;border:1px solid #8a8a8a;font-size:10px;text-align:center;line-height:13px;color:#222">1</div>
 <div class="abs" style="left:1594px;top:0;width:1px;height:40px;background:#a8a8a8"></div>
</div>
</body></html>
